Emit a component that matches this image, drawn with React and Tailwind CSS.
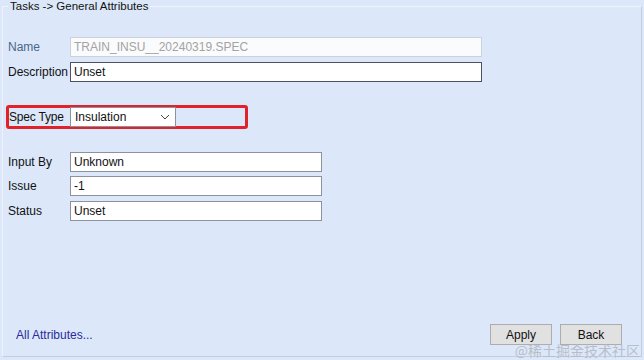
import React from "react";

function Field({ label, value, width = "w-[412px]", muted = false, dark = false, className = "" }) {
  return (
    <div className={`flex items-center ${className}`}>
      <span className={`w-[62px] shrink-0 ${muted ? "text-[#4a6688]" : "text-[#111]"}`}>{label}</span>
      <div
        className={`h-[20px] ${width} flex items-center px-[3px] border ${
          muted
            ? "border-[#cbd2dc] bg-[#fafbfc] text-[#a3a3a3]"
            : dark
            ? "border-[#4b5361] bg-white text-[#111]"
            : "border-[#8d939c] bg-white text-[#111]"
        }`}
      >
        {value}
      </div>
    </div>
  );
}

export default function App() {
  return (
    <div
      className="relative w-[644px] h-[360px] bg-[#dce8fa] pt-[6px] pl-[2px] pr-[2px] text-[12px] leading-none overflow-hidden"
      style={{ fontFamily: '"Liberation Sans", Arial, sans-serif' }}
    >
      <div className="relative h-[351px] border border-[#eef3fb] border-r-[#c3cedd] border-b-[#c3cedd] flex flex-col">
        <span className="absolute -top-[6px] left-[5px] px-[2px] bg-[#dce8fa] text-[11.5px] text-[#111]">
          Tasks -&gt; General Attributes
        </span>

        <div className="pt-[30px] pl-[5px]">
          <Field label="Name" value="TRAIN_INSU__20240319.SPEC" muted />
          <Field label="Description" value="Unset" dark className="mt-[5px]" />

          <div className="mt-[23px] -ml-[2px] w-[242px] h-[24px] border-[3px] border-[#e0232a] rounded-[3px] flex items-center">
            <span className="w-[61px] shrink-0 text-[#111] tracking-[-0.2px]">Spec Type</span>
            <div className="h-[20px] w-[106px] bg-white border border-[#8d939c] flex items-center justify-between pl-[4px] pr-[5px] text-[#111]">
              <span>Insulation</span>
              <svg width="10" height="6" viewBox="0 0 10 6" fill="none">
                <path d="M1 1 L5 5 L9 1" stroke="#444" strokeWidth="1" />
              </svg>
            </div>
          </div>

          <Field label="Input By" value="Unknown" width="w-[252px]" className="mt-[23px]" />
          <Field label="Issue" value="-1" width="w-[252px]" className="mt-[4px]" />
          <Field label="Status" value="Unset" width="w-[252px]" className="mt-[5px]" />
        </div>

        <div className="mt-auto flex items-center justify-between pl-[13px] pr-[19px] pb-[11px]">
          <span className="text-[#2a2a9c]">All Attributes...</span>
          <div className="flex gap-[8px]">
            <button className="w-[62px] h-[21px] bg-[#e1e1e1] border border-[#adadad] text-[#111]">Apply</button>
            <button className="w-[62px] h-[21px] bg-[#e1e1e1] border border-[#adadad] text-[#111]">Back</button>
          </div>
        </div>
      </div>

      <span
        className="absolute right-[4px] bottom-[3px] text-[14px] text-[#b8bec7]"
        style={{ fontFamily: '"Noto Sans CJK SC", "Liberation Sans", sans-serif' }}
      >
        @稀土掘金技术社区
      </span>
    </div>
  );
}
